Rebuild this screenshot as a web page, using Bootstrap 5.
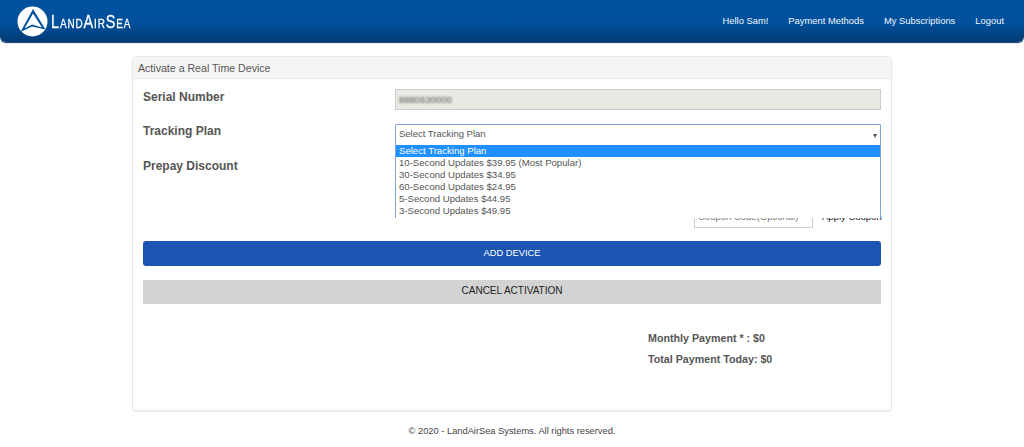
<!DOCTYPE html>
<html lang="en">
<head>
<meta charset="utf-8">
<title>LandAirSea</title>
<link rel="stylesheet" href="https://cdn.jsdelivr.net/npm/bootstrap@5.3.0/dist/css/bootstrap.min.css">
<style>
html,body{height:447px;overflow:hidden}
body{font-family:"Liberation Sans",Arial,sans-serif;font-size:10.5px;color:#555;background:#fff}
.las-nav{height:42px;padding:0 20px 0 17px;border-radius:0 0 6px 6px;background:linear-gradient(#00529f 0,#00509c 55%,#013a73 100%);box-shadow:0 1px 1px #0b3a66}
.las-brand{color:#fff;font-size:19px;font-variant:small-caps;letter-spacing:1.2px;line-height:1;text-decoration:none;gap:3px}
.las-brand svg{flex:none}
.las-word{display:inline-block;transform:scaleX(.76);transform-origin:left center;-webkit-text-stroke:.3px #fff}
.las-link{color:#f1f5fa;font-size:9.4px;text-decoration:none}
.las-links{gap:20px}
.las-shell{width:760px;margin:14px auto 0}
.las-card{height:355px;border-color:#e8e8e8;border-radius:4px;box-shadow:0 1px 2px #f0f0f0}
.las-head{height:22px;padding:0 5px;font-size:10.6px;line-height:22px;background:#f5f5f5;border-bottom-color:#e6e6e6;color:#555}
.las-body{padding:10px 10px 0}
.las-grid{display:grid;grid-template-columns:252px 486px;grid-template-rows:35px 35px 82px}
.las-label{font-size:12px;font-weight:700;color:#555;line-height:16px;margin-top:-1px}
.las-first{margin-top:0}
.las-input{height:21px;border:1px solid #ccc;background:#e9e8e2;padding:0 3px;line-height:19px;font-size:9.5px}
.las-blur{filter:blur(1.1px);color:#555}
.las-select{position:relative;height:22px;border:1px solid #7fa5dc;border-radius:1px;line-height:18px;padding:0 3px;background:#fff;font-size:9.5px;z-index:2}
.las-caret{position:absolute;right:3px;top:9px;width:0;height:0;border-left:2.5px solid transparent;border-right:2.5px solid transparent;border-top:4px solid #555}
.las-options{position:absolute;left:-1px;right:-1px;top:20px;height:73px;background:#fff;border:1px solid #7fa5dc;border-width:0 1px;margin:0;padding:0;list-style:none;font-size:9.6px;line-height:12px;overflow:hidden}
.las-options li{padding-left:3px;height:12px}
.las-options .las-on{background:#1e90ff;color:#fff}
.las-coupon{gap:9px;margin-bottom:13px}
.las-code{width:119px;height:22px;border:1px solid #ccc;font-size:9.5px;padding:0 3px;line-height:20px;color:#777;flex:none}
.las-apply{width:59px;font-size:9.5px;color:#222;white-space:nowrap}
.las-add{height:25px;background:#1b55b1;border:0;border-radius:3px;color:#fff;font-size:9.3px;line-height:25px;padding:0}
.las-cancel{height:24px;background:#d3d3d3;border:0;border-radius:0;color:#222;font-size:10px;line-height:20px;padding:0 0 2px;margin-top:14px}
.las-add:hover{background:#1b55b1;color:#fff}
.las-cancel:hover{background:#d3d3d3;color:#222}
.las-total{margin:27px 0 0 505px;font-size:10.7px;font-weight:700;line-height:14px;color:#555}
.las-total p{margin:0 0 7px}
.las-foot{text-align:center;font-size:9.3px;margin-top:14px;color:#444}
</style>
</head>
<body>
<nav class="las-nav d-flex align-items-center justify-content-between">
  <a class="las-brand d-flex align-items-center" href="#">
    <svg width="31" height="31" viewBox="0 0 31 31" aria-hidden="true">
      <circle cx="15.5" cy="15.5" r="15" fill="#fff"/>
      <path d="M16 3 28.5 23.5 15 20.5 3.5 26Z" fill="#00509c"/>
      <path d="M16 7.5 25 21.5 15 18.5 7.5 22.5Z" fill="#fff"/>
    </svg>
    <span class="las-word">LandAirSea</span>
  </a>
  <div class="las-links d-flex">
    <a class="las-link" href="#">Hello Sam!</a>
    <a class="las-link" href="#">Payment Methods</a>
    <a class="las-link" href="#">My Subscriptions</a>
    <a class="las-link" href="#">Logout</a>
  </div>
</nav>
<main class="las-shell">
  <div class="card las-card">
    <div class="card-header las-head">Activate a Real Time Device</div>
    <div class="card-body las-body">
      <div class="las-grid">
        <div class="las-label las-first">Serial Number</div>
        <div><div class="las-input"><span class="las-blur d-inline-block">8880630000</span></div></div>
        <div class="las-label">Tracking Plan</div>
        <div>
          <div class="las-select">Select Tracking Plan<span class="las-caret"></span>
            <ul class="las-options">
              <li class="las-on">Select Tracking Plan</li>
              <li>10-Second Updates $39.95 (Most Popular)</li>
              <li>30-Second Updates $34.95</li>
              <li>60-Second Updates $24.95</li>
              <li>5-Second Updates $44.95</li>
              <li>3-Second Updates $49.95</li>
            </ul>
          </div>
        </div>
        <div class="las-label">Prepay Discount</div>
        <div class="d-flex justify-content-end align-items-center las-coupon align-self-end">
          <div class="las-code">Coupon Code(Optional)</div>
          <span class="las-apply">Apply Coupon</span>
        </div>
      </div>
      <button type="button" class="btn w-100 d-block las-add">ADD DEVICE</button>
      <button type="button" class="btn w-100 d-block las-cancel">CANCEL ACTIVATION</button>
      <div class="las-total">
        <p>Monthly Payment * : $0</p>
        <p>Total Payment Today: $0</p>
      </div>
    </div>
  </div>
  <footer class="las-foot">© 2020 - LandAirSea Systems. All rights reserved.</footer>
</main>
</body>
</html>
